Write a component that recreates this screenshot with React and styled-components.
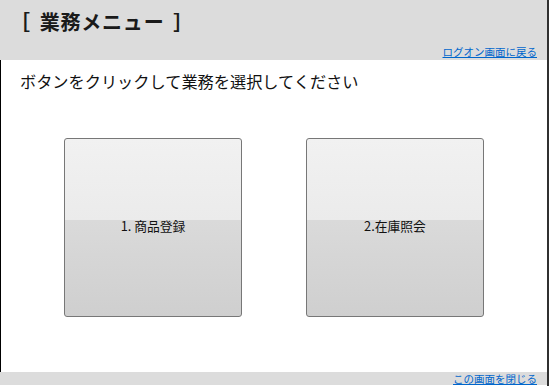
import React from 'react';
import styled, { createGlobalStyle } from 'styled-components';

const GlobalStyle = createGlobalStyle`
    html, body {
        margin: 0;
        padding: 0;
        background: #ffffff;
    }
    body {
        font-family: "Noto Sans CJK JP", "Liberation Sans", sans-serif;
    }
`;

const Frame = styled.div`
    width: 549px;
    height: 386px;
    box-sizing: border-box;
    border-right: 2px solid #303030;
    display: flex;
    flex-direction: column;
    background: #ffffff;
`;

const Header = styled.div`
    height: 60px;
    background: #dcdcdc;
    display: flex;
    flex-direction: column;
    justify-content: space-between;
    padding: 8px 10px 2px 10px;
    box-sizing: border-box;
`;

const Title = styled.h1`
    margin: 0;
    font-size: 20px;
    font-weight: bold;
    line-height: 28px;
    color: #1a1a1a;
    letter-spacing: 0.8px;
    word-spacing: 3.5px;
`;

const LinkRow = styled.div`
    display: flex;
    justify-content: flex-end;
`;

const NavLink = styled.a`
    font-size: 10.5px;
    line-height: 13px;
    color: #0066cc;
    text-decoration: underline;
    cursor: pointer;
`;

const Main = styled.div`
    flex: 1;
    border-left: 1px solid #000000;
    display: flex;
    flex-direction: column;
    padding: 10px 0 0 19px;
`;

const Lead = styled.p`
    margin: 0;
    font-size: 16.2px;
    line-height: 22px;
    color: #111111;
`;

const ButtonRow = styled.div`
    display: flex;
    justify-content: center;
    gap: 64px;
    margin: 46px 0 0 -19px;
`;

const MenuButton = styled.button`
    width: 178px;
    height: 179px;
    border: 1px solid #777777;
    border-radius: 3px;
    background: linear-gradient(
        to bottom,
        #f1f1f1 0%,
        #ebebeb 46%,
        #dadada 46%,
        #cfcfcf 100%
    );
    font-family: "Noto Sans CJK JP", "Liberation Sans", sans-serif;
    font-size: 12.8px;
    color: #111111;
    padding: 0 0 4px;
    cursor: pointer;
`;

const Footer = styled.div`
    height: 13px;
    background: #dcdcdc;
    display: flex;
    justify-content: flex-end;
    align-items: center;
    padding-right: 10px;
    margin-bottom: 1px;
`;

export default function App() {
    return (
        <>
            <GlobalStyle />
            <Frame>
                <Header>
                    <Title>［ 業務メニュー ］</Title>
                    <LinkRow>
                        <NavLink>ログオン画面に戻る</NavLink>
                    </LinkRow>
                </Header>
                <Main>
                    <Lead>ボタンをクリックして業務を選択してください</Lead>
                    <ButtonRow>
                        <MenuButton>1. 商品登録</MenuButton>
                        <MenuButton>2.在庫照会</MenuButton>
                    </ButtonRow>
                </Main>
                <Footer>
                    <NavLink>この画面を閉じる</NavLink>
                </Footer>
            </Frame>
        </>
    );
}
